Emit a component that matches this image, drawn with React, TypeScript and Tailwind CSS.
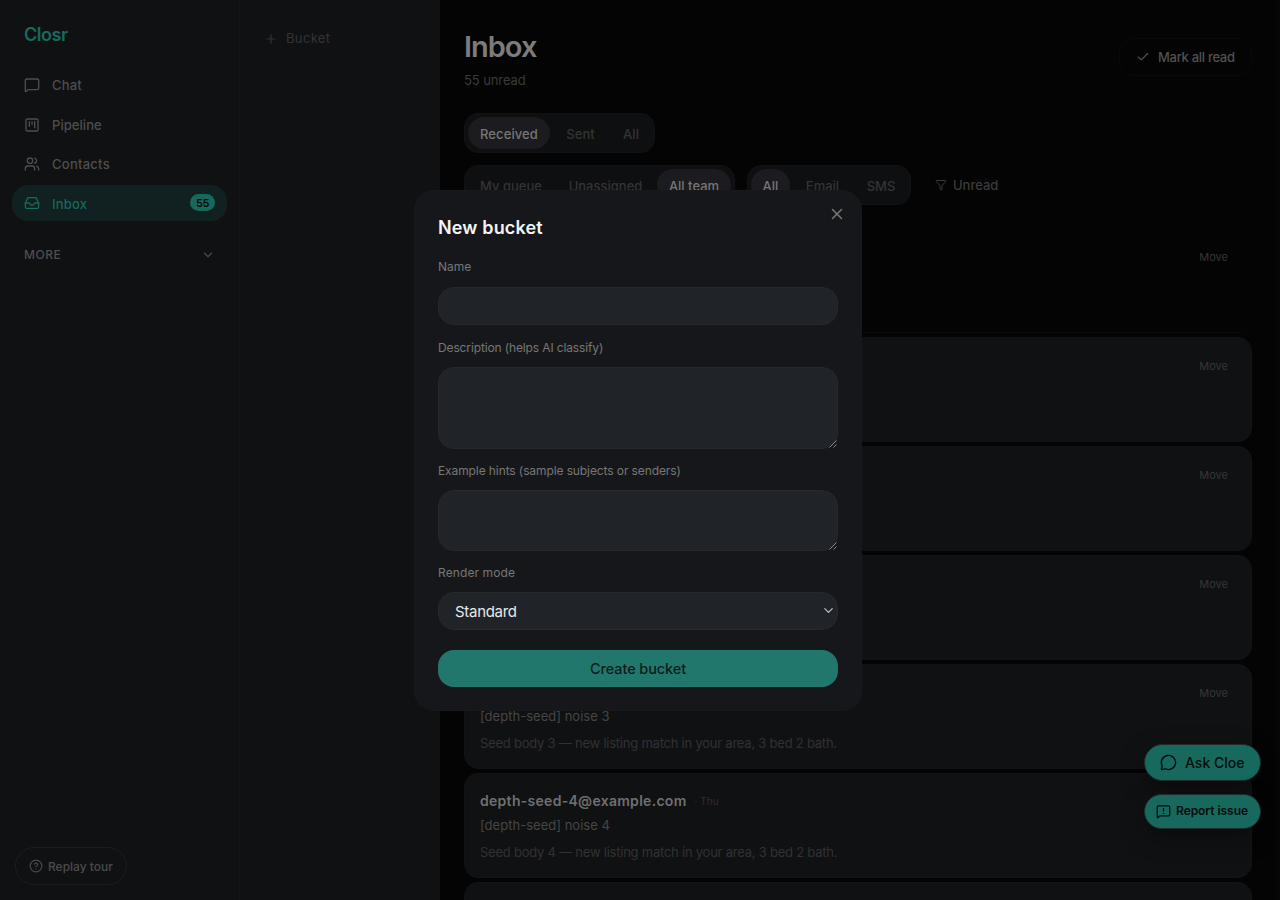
import { Check, ChevronDown, Filter, Inbox, MessageCircle, MessageSquare, MessageSquareWarning, Plus, SquareKanban, Users, X, CircleHelp } from "lucide-react";

const navItems = [
  { label: "Chat", Icon: MessageSquare, tracking: "tracking-[0.2px]" },
  { label: "Pipeline", Icon: SquareKanban, tracking: "tracking-[0.05px]" },
  { label: "Contacts", Icon: Users, tracking: "tracking-[0.25px]" },
];

function Sidebar() {
  return (
    <aside className="flex w-[240px] shrink-0 flex-col border-r border-[#141517] bg-[#101113] text-[13px] font-medium text-[#4e4e4e]">
      <div className="h-[66px] pt-[21px] pl-6 text-[18px] leading-[27px] font-semibold tracking-[-0.45px] text-[#17695d]">Closr</div>
      <nav className="flex flex-col gap-[3.5px] px-3">
        {navItems.map(({ label, Icon, tracking }) => (
          <div key={label} className="flex h-9 items-center gap-3 px-3 pt-[2px]">
            <Icon size={16} strokeWidth={2} />
            <span className={`pt-[2px] ${tracking}`}>{label}</span>
          </div>
        ))}
        <div className="flex h-9 w-[215px] items-center gap-3 rounded-2xl bg-[#112020] px-3 text-[#17695d]">
          <Inbox size={16} strokeWidth={2} />
          <span className="pt-[4px] tracking-[0.2px]">Inbox</span>
          <span className="ml-auto flex h-[17px] w-[25px] items-center justify-center rounded-full bg-[#17695d] pt-[2px] text-[11px] font-semibold tracking-[-0.3px] text-[#060707]">55</span>
        </div>
      </nav>
      <div className="mt-[25px] flex h-[18px] items-center justify-between pr-[24px] pl-6 text-[12px] tracking-[0.5px]">
        <span>MORE</span>
        <ChevronDown size={14} />
      </div>
      <div className="mt-auto mb-[15px] ml-[15px] flex h-[38px] w-[112px] items-center gap-[5px] rounded-full border border-[#1c1d1f] pl-[13px] text-[12px] text-[#4b4b4c]">
        <CircleHelp size={14} strokeWidth={2} />
        <span className="pt-px whitespace-nowrap">Replay tour</span>
      </div>
    </aside>
  );
}

function Pills({ items, active, className = "" }: { items: string[][]; active: number; className?: string }) {
  return (
    <div className={`flex h-10 shrink-0 items-center justify-between rounded-[14px] border border-[#111214] bg-[#0e0f11] p-[3px] text-[13px] font-medium text-[#343434] ${className}`}>
      {items.map(([label, width], i) => (
        <div key={label} className={`flex h-8 items-center justify-center rounded-2xl pt-[3px] whitespace-nowrap ${width} ${i === active ? "bg-[#1c1b1f] text-[#767676]" : ""}`}>
          {label}
        </div>
      ))}
    </div>
  );
}

const messages = [-1, 0, 1, 2, 3, 4, 5].map((n) => {
  const hasText = n >= 0 && n < 5;
  return {
    id: n,
    sender: hasText ? `depth-seed-${n}@example.com` : "",
    subject: hasText ? `[depth-seed] noise ${n}` : "",
    body: hasText ? `Seed body ${n} — new listing match in your area, 3 bed 2 bath.` : "",
    read: n < 0,
  };
});

function MainPane() {
  return (
    <main className="flex h-[900px] min-w-0 flex-1 flex-col overflow-hidden border-r-4 border-[#070707] bg-[#040404] pr-6 pl-6">
      <header className="flex h-[113px] shrink-0 justify-between">
        <div>
          <h1 className="mt-[29px] text-[29px] leading-[36px] font-semibold tracking-[-1px] text-[#7c7c7c]">Inbox</h1>
          <p className="mt-[6px] text-[13px] leading-[18px] tracking-[-0.1px] text-[#3a3a3a]">55 unread</p>
        </div>
        <div className="mt-[38px] flex h-[38px] w-[133px] items-center gap-[8px] rounded-[14px] border border-[#090909] pl-[16px] text-[13px] font-medium tracking-[-0.3px] text-[#515151]">
          <Check size={14} />
          <span className="pt-px whitespace-nowrap">Mark all read</span>
        </div>
      </header>
      <Pills active={0} className="w-[191px] tracking-[0.1px]" items={[["Received", "w-[82px]"], ["Sent", "w-[60px]"], ["All", "w-[40px]"]]} />
      <div className="mt-3 flex shrink-0 gap-3">
        <Pills active={2} className="w-[271px]" items={[["My queue", "w-[86px]"], ["Unassigned", "w-[99px]"], ["All team", "w-[74px]"]]} />
        <Pills active={0} className="w-[164px]" items={[["All", "w-[39px]"], ["Email", "w-[62px]"], ["SMS", "w-[52px]"]]} />
        <div className="flex h-10 items-center gap-[6px] pl-[12px] text-[13px] font-medium text-[#3a3a3a]">
          <Filter size={12} />
          <span className="pt-px">Unread</span>
        </div>
      </div>
      <div className="mt-[22.5px] flex shrink-0 flex-col gap-[3.5px]">
        {messages.map((m) => (
          <article key={m.id} className={`flex h-[105.5px] shrink-0 justify-between rounded-[14px] border px-[15px] ${m.read ? "border-transparent border-b-[#0a0a0a]" : "border-[#121315] bg-[#101113]"}`}>
            <div className="pt-[17px] whitespace-nowrap">
              <div className="flex h-5 items-center gap-2 leading-[20px]">
                <span className="text-[14px] font-semibold tracking-[0.29px] text-[#6f6f6f]">{m.sender}</span>
                <span className="text-[10px] text-[#2d2d2e]">{m.sender && "· Thu"}</span>
              </div>
              <div className="mt-[5px] h-[18px] text-[13px] leading-[18px] tracking-[0.02px] text-[#464646]">{m.subject}</div>
              <div className="mt-[9px] h-[18px] text-[13px] leading-[18px] tracking-[-0.23px] text-[#303132]">{m.body}</div>
            </div>
            {m.id < 5 && <span className="pt-[20px] pr-[8px] text-[11px] leading-[16px] text-[#363637]">Move</span>}
          </article>
        ))}
      </div>
    </main>
  );
}

function ResizeGrip() {
  return (
    <svg className="absolute right-0 bottom-0" width="8" height="8" viewBox="0 0 8 8" fill="none" stroke="#8b8b8b">
      <path d="M0.5 7.5 7.5 0.5M4.5 7.5 7.5 4.5" />
    </svg>
  );
}

const labelClass = "block text-[12px] leading-[18px] text-[#777778]";
const fieldClass = "relative rounded-2xl border border-[#26282b] bg-[#202327]";

function BucketDialog() {
  return (
    <section role="dialog" className="absolute top-[189.5px] left-[414px] h-[521.5px] w-[448px] rounded-[20px] border border-[#18191d] bg-[#16171a] px-[23px] pt-[24px]">
      <X className="absolute top-[14.5px] right-[15px] text-[#777778]" size={18} strokeWidth={2} />
      <h2 className="text-[18px] leading-[26px] font-semibold tracking-[0.15px] text-[#f4f4f4]">New bucket</h2>
      <label className={`mt-[17.5px] ${labelClass}`}>Name</label>
      <div className={`mt-[10.5px] h-[38.5px] ${fieldClass}`} />
      <label className={`mt-[13.5px] tracking-[-0.13px] ${labelClass}`}>Description (helps AI classify)</label>
      <div className={`mt-[10.5px] h-[81.5px] ${fieldClass}`}><ResizeGrip /></div>
      <label className={`mt-[13px] tracking-[-0.1px] ${labelClass}`}>Example hints (sample subjects or senders)</label>
      <div className={`mt-[10.5px] h-[60.5px] ${fieldClass}`}><ResizeGrip /></div>
      <label className={`mt-[13px] tracking-[0.1px] ${labelClass}`}>Render mode</label>
      <div className={`mt-[10.5px] flex h-[37.5px] items-center justify-between pr-px pl-4 text-[15px] tracking-[-0.3px] text-[#e9e9e9] ${fieldClass}`}>
        <span className="pt-[2px]">Standard</span>
        <ChevronDown size={15} strokeWidth={1.75} className="text-[#c8c8c8]" />
      </div>
      <button className="mt-5 flex h-[37px] w-full items-center justify-center rounded-2xl bg-[#22776d] pt-[2px] text-[14.5px] font-medium tracking-[-0.1px] text-[#0b1c1b]">Create bucket</button>
    </section>
  );
}

export default function App() {
  return (
    <div className="relative flex h-[900px] w-[1280px] overflow-hidden bg-[#040404] font-['Inter',sans-serif]">
      <Sidebar />
      <aside className="w-[200px] shrink-0 border-r border-[#111214] bg-[#101113] pt-[30px] pl-[24px] text-[#343435]">
        <div className="flex h-[18px] items-center gap-2 text-[13px]">
          <Plus size={14} />
          <span className="tracking-[0.35px]">Bucket</span>
        </div>
      </aside>
      <MainPane />
      <BucketDialog />
      <div className="absolute top-[743.5px] left-[1144px] flex flex-col gap-[13px] whitespace-nowrap text-[#060c0b]">
        <button className="flex h-[37px] w-[117px] items-center gap-[8px] rounded-full border border-[#1f2b2b] bg-[#17695d] pl-[15px] text-[14px] font-medium shadow-[0_8px_24px_rgba(0,0,0,0.35)]">
          <MessageCircle size={17} strokeWidth={2} />
          Ask Cloe
        </button>
        <button className="flex h-[35px] w-[117px] items-center gap-[5px] rounded-full border border-[#1f2b2b] bg-[#17695d] pl-[11px] text-[12px] font-semibold tracking-[-0.05px] shadow-[0_8px_24px_rgba(0,0,0,0.35)]">
          <MessageSquareWarning size={15} strokeWidth={2} />
          Report issue
        </button>
      </div>
    </div>
  );
}
